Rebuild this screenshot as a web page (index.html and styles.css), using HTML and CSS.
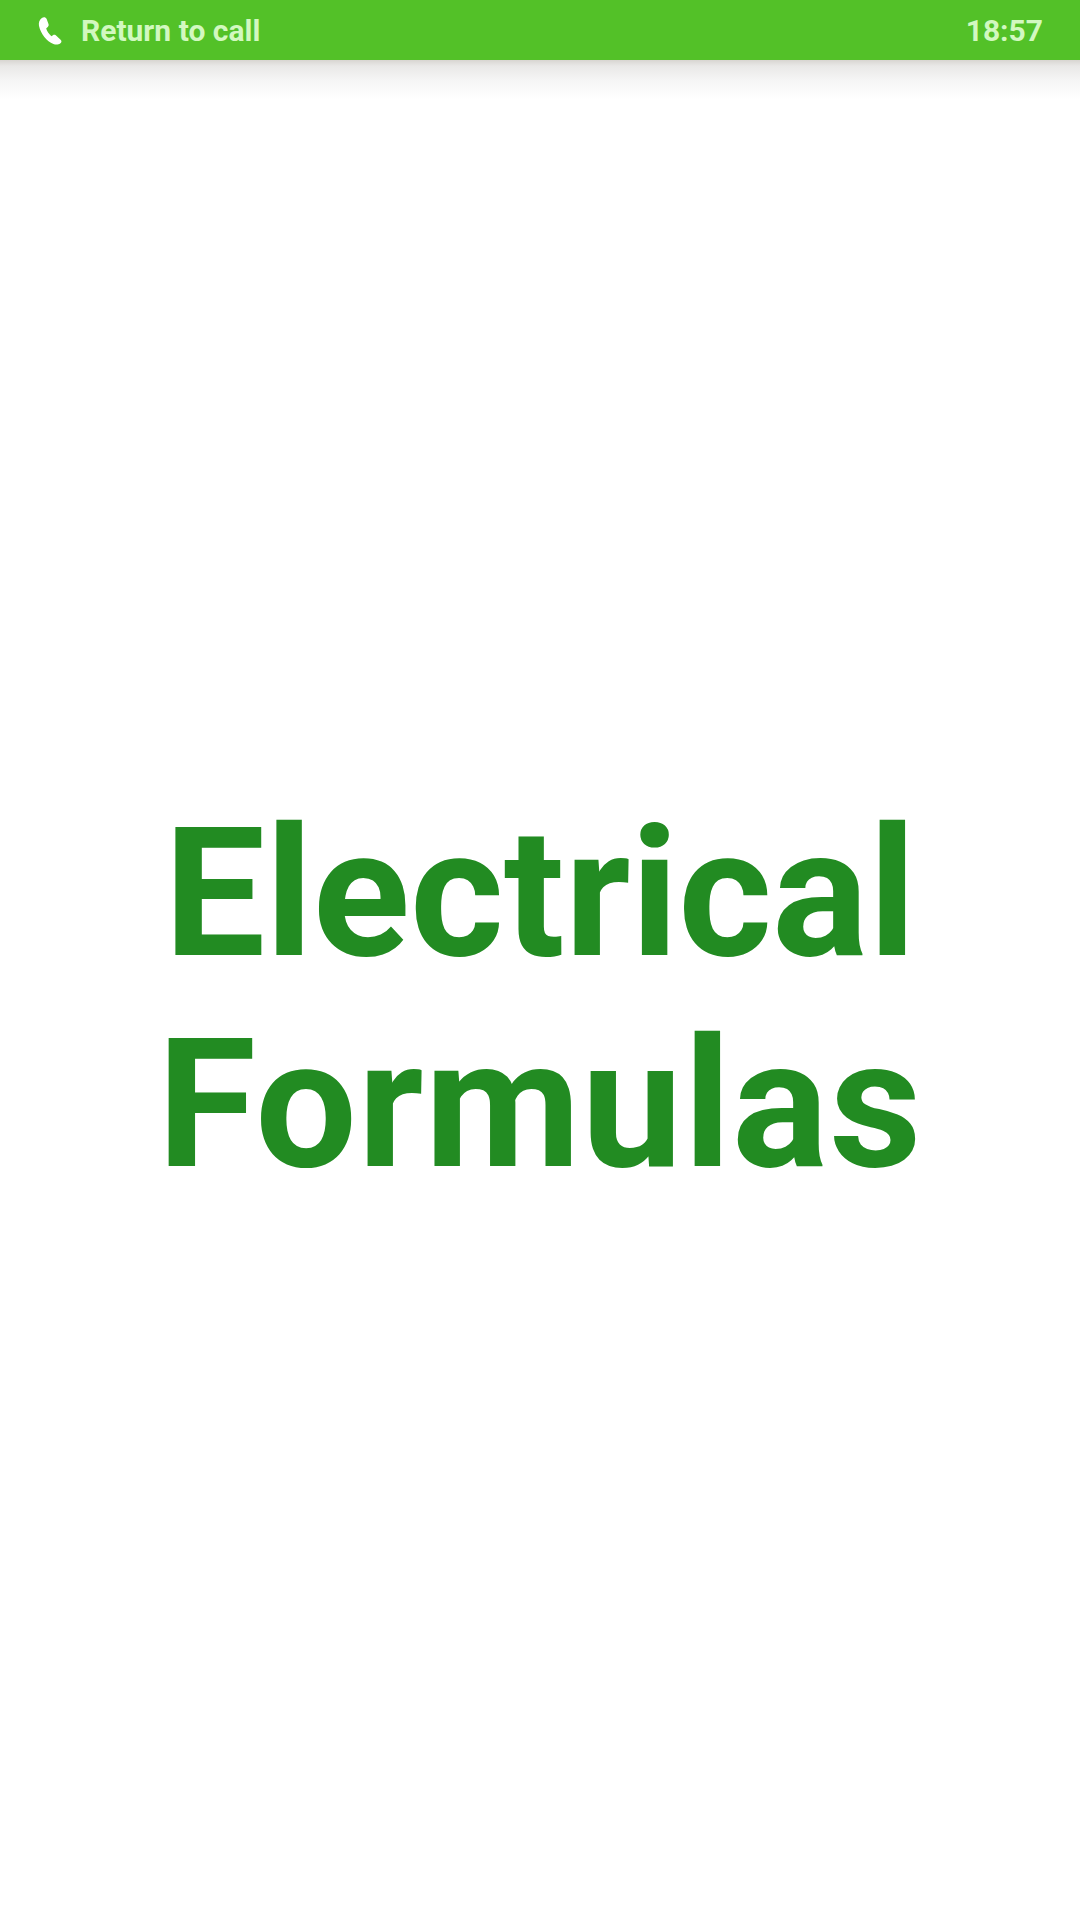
FILE: index.html
```html
<!DOCTYPE html>
<html lang="en">
<head>
<meta charset="utf-8">
<title>Electrical Formulas</title>
<link rel="stylesheet" href="styles.css">
</head>
<body>
<header class="call-bar">
  <div class="call-left">
    <svg class="call-icon" viewBox="0 0 26 30" aria-hidden="true"><path d="M4 2C6 .5 8 1 9 3l2 5.500C11.500 10 10.500 11 9.500 12l-1 1c1 3 3 6 5.500 8l1.500-1c1-.7 2-.5 3 0l5 4.500c1.500 1.500 1 3-.5 4-1.500 1-4 1.500-7 .5C9 26 3 19 1 10 .5 7 1.500 3.500 4 2z"/></svg>
    <span class="call-label">Return to call</span>
  </div>
  <span class="call-time">18:57</span>
</header>
<main class="splash">
  <h1 class="title"><span class="line">Electrical</span><span class="line line-wide">Formulas</span></h1>
</main>
</body>
</html>
```
FILE: styles.css
```css
* { box-sizing: border-box; }
html, body { margin: 0; padding: 0; }
body {
  width: 1080px;
  height: 1920px;
  display: flex;
  flex-direction: column;
  background: #fff;
  font-family: Roboto, sans-serif;
  overflow: hidden;
}
.call-bar {
  height: 60px;
  flex: none;
  display: flex;
  align-items: center;
  justify-content: space-between;
  padding: 0 37px 0 38px;
  background: #53c128;
  position: relative;
}
.call-bar::after {
  content: "";
  position: absolute;
  left: 0;
  right: 0;
  top: 60px;
  height: 40px;
  background: linear-gradient(to bottom, #d8d5d1 0, #e9e8e7 6px, #f5f5f5 20px, #fff 100%);
}
.call-left { display: flex; align-items: center; gap: 18px; }
.call-icon { width: 25px; height: 29px; fill: #fff; }
.call-label, .call-time {
  font-size: 30px;
  font-weight: 700;
  color: #d2f8c0;
}
.splash {
  flex: 1;
  display: flex;
  align-items: center;
  justify-content: center;
  padding-top: 18px;
}
.title {
  margin: 0;
  font-size: 180px;
  font-weight: 700;
  line-height: 211px;
  text-align: center;
  color: #228b22;
}
.line { display: block; }
.line-wide { letter-spacing: 1px; }
```
